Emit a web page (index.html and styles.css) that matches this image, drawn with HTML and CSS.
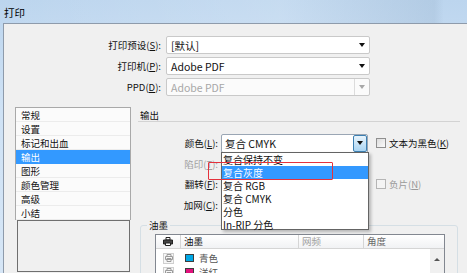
FILE: index.html
```html
<!DOCTYPE html>
<html lang="zh-CN">
<head>
<meta charset="utf-8">
<title>打印</title>
<link rel="stylesheet" href="styles.css">
</head>
<body>
<div class="window">
  <div class="titlebar">打印</div>
  <div class="body">
    <div class="top">
      <div class="frow"><label>打印预设(<u>S</u>):</label><div class="select"><span>[默认]</span><i class="arrow"></i></div></div>
      <div class="frow"><label>打印机(<u>P</u>):</label><div class="select"><span>Adobe PDF</span><i class="arrow"></i></div></div>
      <div class="frow"><label>PPD(<u>D</u>):</label><div class="select disabled"><span>Adobe PDF</span><i class="btn"><i class="arrow"></i></i></div></div>
    </div>
    <div class="main">
      <div class="side">
        <ul class="nav">
          <li>常规</li>
          <li>设置</li>
          <li>标记和出血</li>
          <li class="sel">输出</li>
          <li>图形</li>
          <li>颜色管理</li>
          <li>高级</li>
          <li>小结</li>
        </ul>
        <div class="preview"></div>
      </div>
      <div class="panel">
        <div class="phead">输出</div>
        <div class="orows">
          <div class="orow">
            <label>颜色(<u>L</u>):</label>
            <div class="cselect"><span>复合 CMYK</span><i class="dbtn"><i class="arrow"></i></i></div>
            <span class="check"><i class="box"></i><span>文本为黑色(<u>K</u>)</span></span>
            <ul class="dropdown">
              <li>复合保持不变</li>
              <li class="sel">复合灰度</li>
              <li>复合 RGB</li>
              <li>复合 CMYK</li>
              <li>分色</li>
              <li>In-RIP 分色</li>
            </ul>
          </div>
          <div class="orow"><label class="dim">陷印(<u>T</u>):</label></div>
          <div class="orow"><label>翻转(<u>F</u>):</label><span class="spacer"></span><span class="check dimc"><i class="box"></i><span>负片(<u>N</u>)</span></span></div>
          <div class="orow"><label>加网(<u>C</u>):</label></div>
        </div>
        <fieldset class="inks">
          <legend>油墨</legend>
          <div class="table">
            <div class="thead">
              <div class="th ic"><svg width="10" height="9" viewBox="0 0 10 9"><path d="M3 0.5h4v2.5H3z" fill="#fff" stroke="#222"/><path d="M0.5 3h9v4h-9z" fill="#444" stroke="#222"/><path d="M2.5 6h5v2.5h-5z" fill="#fff" stroke="#222"/></svg></div>
              <div class="th name">油墨</div>
              <div class="th freq">网频</div>
              <div class="th ang">角度</div>
            </div>
            <div class="tbody">
              <div class="rows">
                <div class="tr">
                  <div class="td ic"><span class="pbox"><svg width="8" height="8" viewBox="0 0 8 8"><path d="M2 0.5h4v2H2zM0.5 2.5h7v3h-7zM2 4.5h4v3H2z" fill="none" stroke="#9a9a9a"/></svg></span></div>
                  <div class="td name"><i class="sw cyan"></i><span>青色</span></div>
                </div>
                <div class="tr">
                  <div class="td ic"><span class="pbox"><svg width="8" height="8" viewBox="0 0 8 8"><path d="M2 0.5h4v2H2zM0.5 2.5h7v3h-7zM2 4.5h4v3H2z" fill="none" stroke="#9a9a9a"/></svg></span></div>
                  <div class="td name"><i class="sw mag"></i><span>洋红</span></div>
                </div>
              </div>
              <div class="scroll"><i class="up"></i></div>
            </div>
          </div>
        </fieldset>
      </div>
    </div>
  </div>
  <div class="redmark"></div>
</div>
</body>
</html>
```
FILE: styles.css
```css
* { box-sizing: border-box; }
html, body { margin: 0; padding: 0; }
body {
  width: 467px;
  height: 273px;
  overflow: hidden;
  font-family: "Noto Sans CJK SC", "Noto Sans", sans-serif;
  font-size: 9.5px;
  color: #111;
  background: #cadcf0;
}
u { text-decoration: underline; text-underline-offset: 1px; }
.window {
  position: relative;
  height: 273px;
  overflow: hidden;
  background: linear-gradient(180deg, #bcd5ee 0%, #cfe2f5 40%, #d6e6f6 100%);
}
.titlebar {
  height: 23px;
  padding-left: 4px;
  line-height: 26px;
  font-size: 10.5px;
  color: #000;
  background: linear-gradient(90deg, rgba(255,255,255,0) 0%, rgba(255,255,255,0.15) 60%, rgba(160,185,210,0.35) 93%, rgba(255,255,255,0) 95%);
}
.body {
  margin-left: 3px;
  height: 250px;
  border-left: 1px solid #8e9bab;
  border-top: 1px solid #8e9bab;
  background: #f0f0f0;
  padding-top: 12px;
}
.top { display: flex; flex-direction: column; gap: 3px; }
.frow { display: flex; align-items: center; gap: 5px; height: 18px; }
.frow label { width: 157px; text-align: right; }
.select {
  width: 204px;
  height: 18px;
  border: 1px solid #c9c9c9;
  border-radius: 2px;
  background: #fff;
  display: flex;
  align-items: center;
  padding-left: 4px;
  font-size: 10.5px;
}
.select .arrow { margin-left: auto; margin-right: 4px; }
.select.disabled { color: #a8a8a8; background: #fbfbfb; }
.select .btn {
  margin-left: auto;
  width: 15px;
  height: 100%;
  border-left: 1px solid #dcdcdc;
  display: flex;
  align-items: center;
  justify-content: center;
}
.select.disabled .arrow { margin: 0; border-top-color: #a8a8a8; }
.arrow {
  display: block;
  width: 0;
  height: 0;
  border-left: 3.5px solid transparent;
  border-right: 3.5px solid transparent;
  border-top: 4px solid #111;
}
.main { display: flex; gap: 7px; margin-top: 11px; padding-left: 11px; }
.side { width: 116px; display: flex; flex-direction: column; }
.nav {
  list-style: none;
  margin: 0;
  padding: 0;
  border: 1px solid #a9a9a9;
  border-bottom: none;
  background: #fbfbfb;
}
.nav li {
  height: 14px;
  line-height: 14px;
  padding-left: 5px;
  border-bottom: 1px solid #ececec;
}
.nav li.sel { background: #3399ff; color: #fff; border-bottom-color: #3399ff; }
.preview {
  margin-left: 2px;
  width: 113px;
  height: 52px;
  border: 1px solid #6f6f6f;
  background: #f0f0f0;
}
.panel { width: 322px; display: flex; flex-direction: column; }
.phead {
  height: 15px;
  line-height: 16px;
  padding-left: 2px;
  border-bottom: 1px solid #d3d3d3;
}
.orows { display: flex; flex-direction: column; margin-top: 11px; }
.orow { position: relative; display: flex; align-items: center; height: 20.5px; }
.orow label { width: 80px; text-align: right; flex: none; }
.orow label.dim { color: #a0a0a0; }
.cselect {
  margin-left: 3px;
  width: 147px;
  height: 19px;
  border: 1px solid #9aa6b4;
  border-radius: 2px;
  background: #fff;
  display: flex;
  align-items: center;
  padding-left: 3px;
  font-size: 10.5px;
}
.dbtn {
  margin-left: auto;
  width: 14px;
  height: 100%;
  border: 1px solid #3c7fb1;
  border-radius: 2px;
  background: linear-gradient(180deg, #e8f4fc 0%, #c9e4f7 50%, #a9d4f2 100%);
  display: flex;
  align-items: center;
  justify-content: center;
}
.spacer { width: 150px; flex: none; }
.check { margin-left: 8px; display: flex; align-items: center; gap: 3px; }
.box {
  display: block;
  width: 10px;
  height: 10px;
  border: 1px solid #8f8f8f;
  background: linear-gradient(135deg, #dcdcdc, #fbfbfb);
}
.dimc { color: #9a9a9a; }
.dimc .box { border-color: #b5b5b5; background: #f4f4f4; }
.dropdown {
  position: absolute;
  left: 83px;
  top: 19px;
  z-index: 2;
  width: 148px;
  height: 78px;
  margin: 0;
  padding: 0;
  list-style: none;
  background: #fff;
  border: 1px solid #646464;
  box-shadow: 2px 2px 3px rgba(0,0,0,0.25);
  font-size: 10px;
}
.dropdown li { height: 13px; line-height: 13px; padding-left: 1px; }
.dropdown li.sel { background: #3399ff; color: #fff; }
.inks {
  margin: 4px 0 0 2px;
  width: 318px;
  height: 60px;
  padding: 3px 0 0 14px;
  border: 1px solid #d5dfe5;
  border-radius: 3px;
}
.inks legend { padding: 0 2px; margin-left: -8px; line-height: 12px; }
.table {
  width: 290px;
  border: 1px solid #828790;
  background: #fff;
}
.thead {
  display: flex;
  height: 14px;
  background: linear-gradient(180deg, #ffffff, #f1f2f4);
  border-bottom: 1px solid #d5d5d5;
}
.th { height: 13px; line-height: 13px; border-right: 1px solid #d5d5d5; padding-left: 3px; }
.ic { width: 25px; flex: none; display: flex; align-items: center; justify-content: center; padding-left: 0; }
.name { width: 118px; flex: none; }
.freq { width: 65px; flex: none; color: #a0a0a0; }
.ang { flex: 1; color: #6a6a6a; border-right: none; }
.tbody { display: flex; height: 40px; }
.rows { flex: 1; padding-top: 2px; }
.tr { display: flex; height: 14px; align-items: center; }
.td.name { display: flex; align-items: center; gap: 5px; padding-left: 4px; color: #555; }
.pbox {
  width: 11px;
  height: 11px;
  border: 1px solid #cfcfcf;
  background: #f6f6f6;
  display: flex;
  align-items: center;
  justify-content: center;
}
.sw { display: block; width: 9px; height: 8px; border: 1px solid #3d3d3d; }
.sw.cyan { background: #00a8e6; }
.sw.mag { background: #e2127d; }
.scroll { width: 14px; background: #f0f0f0; display: flex; justify-content: center; padding-top: 9px; }
.up {
  display: block;
  width: 0;
  height: 0;
  border-left: 3px solid transparent;
  border-right: 3px solid transparent;
  border-bottom: 3px solid #555;
}
.redmark {
  position: absolute;
  left: 208px;
  top: 162px;
  width: 125px;
  height: 18px;
  border: 1.5px solid #e5323c;
  border-radius: 1px;
  z-index: 3;
}
```
